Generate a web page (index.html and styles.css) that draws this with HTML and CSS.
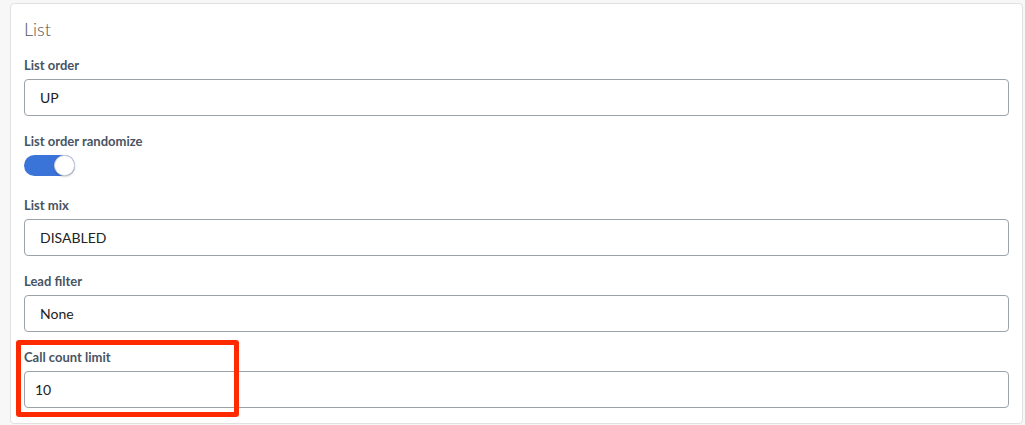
FILE: index.html
```html
<!DOCTYPE html>
<html>
<head>
<meta charset="utf-8">
<link rel="stylesheet" href="styles.css">
</head>
<body>
<div class="card">
  <div class="card-title">List</div>
  <div class="fields">
    <div class="field">
      <div class="label">List order</div>
      <div class="input select">UP</div>
    </div>
    <div class="field">
      <div class="label">List order randomize</div>
      <div class="toggle"><span class="knob"></span></div>
    </div>
    <div class="field">
      <div class="label">List mix</div>
      <div class="input select">DISABLED</div>
    </div>
    <div class="field">
      <div class="label">Lead filter</div>
      <div class="input select">None</div>
    </div>
    <div class="field highlighted">
      <div class="label">Call count limit</div>
      <div class="input number">10</div>
      <div class="highlight-box"></div>
    </div>
  </div>
</div>
</body>
</html>
```

FILE: styles.css
```css
html, body {
  margin: 0;
  height: 100%;
}
body {
  background: #f7f7f7;
  padding: 3px 2px 2px 10px;
  box-sizing: border-box;
  font-family: Lato, "Liberation Sans", sans-serif;
}
.card {
  background: #fff;
  border: 1px solid #e1e1e1;
  border-radius: 4px;
  padding: 15px 13px 15px 13px;
}
.card-title {
  font-size: 18px;
  font-weight: 300;
  line-height: 21px;
  color: #555;
}
.fields {
  display: flex;
  flex-direction: column;
  gap: 16px;
  margin-top: 16px;
}
.field {
  display: flex;
  flex-direction: column;
  position: relative;
}
.label {
  font-size: 13px;
  font-weight: 700;
  line-height: 18px;
  color: #485463;
  margin-bottom: 5px;
}
.input {
  height: 37px;
  box-sizing: border-box;
  border: 1px solid #9aa2aa;
  border-radius: 4px;
  display: flex;
  align-items: center;
  font-size: 14px;
  color: #222;
}
.select {
  padding-left: 15px;
}
.number {
  padding-left: 10px;
}
.toggle {
  width: 51px;
  height: 21px;
  border-radius: 11px;
  background: #3a74d9;
  position: relative;
  margin-bottom: 4px;
}
.knob {
  position: absolute;
  right: 0;
  top: 0;
  width: 21px;
  height: 21px;
  box-sizing: border-box;
  border-radius: 50%;
  background: #fff;
  border: 1px solid #d6d6d6;
  box-shadow: 0 1px 2px rgba(0,0,0,0.2);
}
.highlight-box {
  position: absolute;
  left: -8px;
  top: -8px;
  width: 223px;
  height: 77px;
  box-sizing: border-box;
  border: 5px solid #ff2a00;
  border-radius: 3px;
  pointer-events: none;
}
```
